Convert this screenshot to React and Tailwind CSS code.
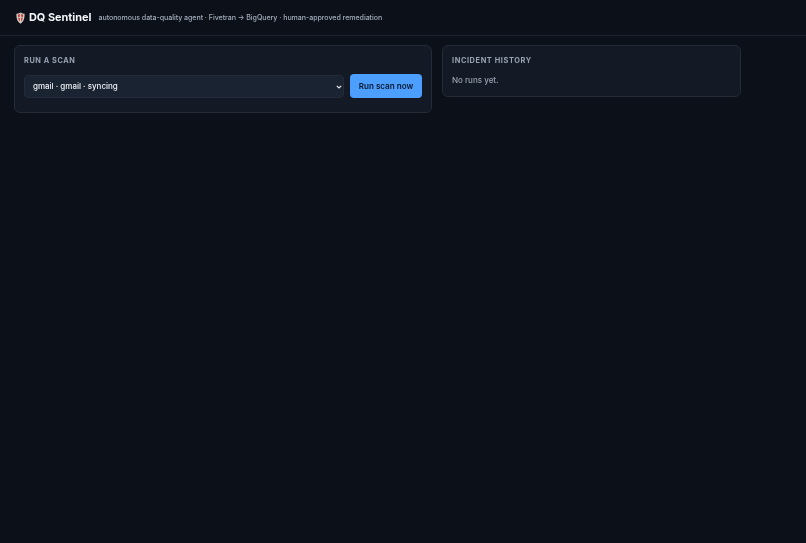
export default function App() {
  return (
    <div className="min-h-screen bg-[#0c1018] text-[#e6e9ef] antialiased [will-change:transform] font-['Inter',sans-serif]">
      <header className="h-[36px] flex items-center px-[16px] border-b border-[#1c2330]">
        <svg width="9" height="12" viewBox="0 0 12 14" preserveAspectRatio="none" className="shrink-0 mr-[4px]">
          <path d="M6 0.6 C7.8 1.6 9.6 2 11.4 2 C11.6 7 10.6 11 6 13.6 C1.4 11 0.4 7 0.6 2 C2.4 2 4.2 1.6 6 0.6Z" fill="#d9d3cc" />
          <path d="M6 1.8 C7 2.4 8.2 2.8 9.6 2.9 C9.7 6.8 8.8 10 6 12 C3.2 10 2.3 6.8 2.4 2.9 C3.8 2.8 5 2.4 6 1.8Z" fill="#b8453e" />
          <path d="M5.2 2 H6.8 V12 H5.2Z" fill="#e4c9bd" />
          <path d="M3 5.6 H9 V6.8 H3Z" fill="#e4c9bd" />
        </svg>
        <h1 className="text-[10.9px] leading-none font-bold text-[#f3f5f8] mr-[7px]">DQ Sentinel</h1>
        <p className="text-[7.05px] leading-none font-medium text-[#a3adbd] tracking-[-0.005em]">autonomous data-quality agent · Fivetran → BigQuery · human-approved remediation</p>
      </header>
      <main className="grid grid-cols-[418px_299px] gap-[10px] items-start pl-[14px] pt-[9px]">
        <section className="bg-[#141a25] border border-[#232b39] rounded-[6px] px-[9px] pt-[9px] pb-[14px]">
          <h2 className="text-[7.3px] leading-[12px] font-bold tracking-[0.08em] text-[#98a2b3] mb-[7px]">RUN A SCAN</h2>
          <div className="flex items-center gap-[6px]">
            <div className="relative flex-1 min-w-0">
              <select className="block appearance-none w-full h-[23px] bg-[#1a2332] border border-[#232b39] rounded-[4px] px-[8px] text-[8px] font-medium text-[#eef0f4] font-['Inter',sans-serif]">
                <option>gmail · gmail · syncing</option>
              </select>
              <svg width="6" height="4" viewBox="0 0 6 4" className="absolute right-[2px] top-[10px]">
                <path d="M0.8 0.8 L3 3 L5.2 0.8" fill="none" stroke="#e6e9ef" strokeWidth="1.2" />
              </svg>
            </div>
            <button className="h-[24px] w-[72px] bg-[#4d9fff] rounded-[4px] text-[8.1px] font-semibold text-[#07172e]">Run scan now</button>
          </div>
        </section>
        <section className="bg-[#141a25] border border-[#232b39] rounded-[6px] px-[9px] pt-[9px] pb-[9px]">
          <h2 className="text-[7.4px] leading-[12px] font-bold tracking-[0.08em] text-[#98a2b3] mb-[7px]">INCIDENT HISTORY</h2>
          <p className="text-[8px] leading-[13px] font-medium text-[#98a2b3]">No runs yet.</p>
        </section>
      </main>
    </div>
  );
}
